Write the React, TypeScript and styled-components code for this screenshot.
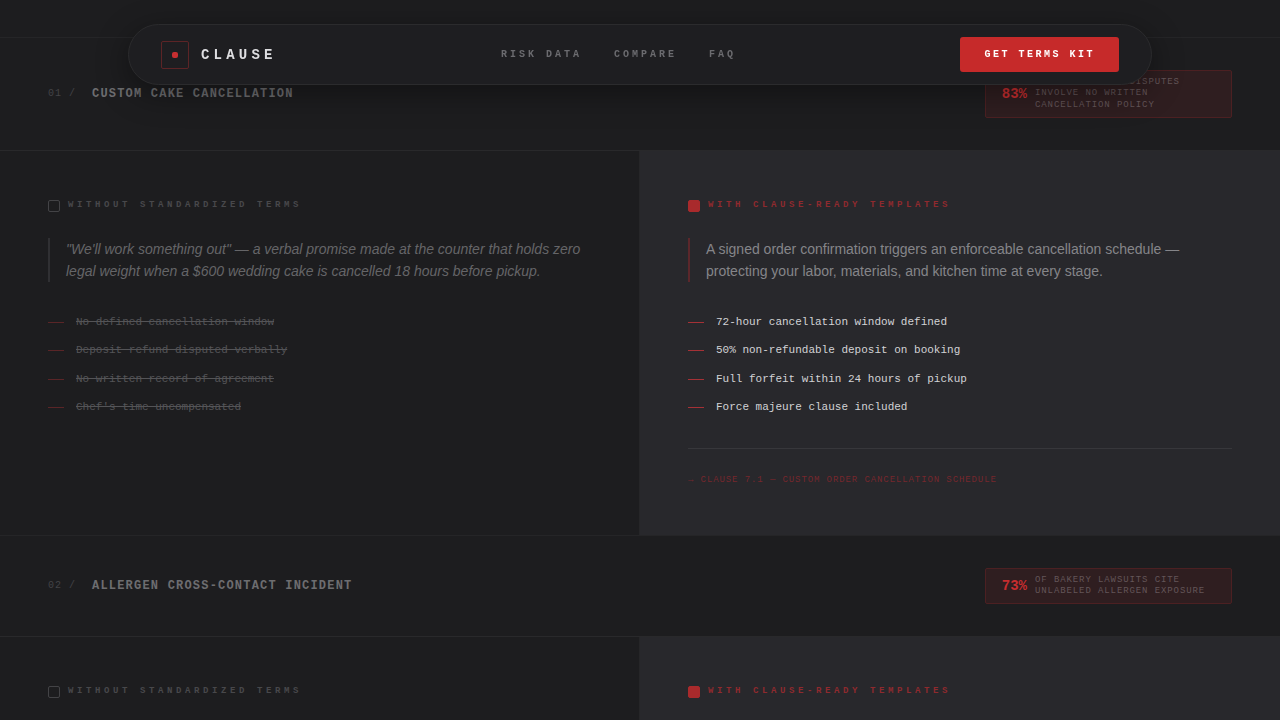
import React from "react";
import styled, { createGlobalStyle } from "styled-components";

const mono = `"Liberation Mono", monospace`;
const sans = `"Liberation Sans", sans-serif`;

const GlobalStyle = createGlobalStyle`
  *, *::before, *::after { box-sizing: border-box; }
  body { margin: 0; background: #1d1d1f; }
  h2, p, ul, blockquote { margin: 0; padding: 0; font-weight: 400; }
`;

const Page = styled.main`
  height: 100vh;
  overflow: hidden;
  padding-top: 37px;
  background: #1d1d1f;
  color: #d9d9dc;
  font-family: ${sans};
`;

/* Floating navigation pill */
const NavShell = styled.header`
  position: fixed;
  top: 24px;
  left: 24px;
  right: 24px;
  z-index: 10;
  display: flex;
  justify-content: space-between;
  align-items: center;
  max-width: 1024px;
  margin: 0 auto;
  padding: 12px 32px;
  border: 1px solid #2b2b2d;
  border-radius: 40px;
  background: #1e1e21;
  box-shadow: 0 8px 32px rgba(0, 0, 0, 0.4);
  font-family: ${mono};
`;

const Brand = styled.a`
  display: flex;
  align-items: center;
  gap: 12px;
  color: #dedee1;
  font-size: 14px;
  line-height: 16px;
  font-weight: 700;
  letter-spacing: 0.3em;
  text-decoration: none;
`;

const BrandMark = styled.span`
  display: grid;
  place-items: center;
  width: 28px;
  height: 28px;
  border: 1px solid #5c2426;
  border-radius: 2px;

  &::before {
    content: "";
    width: 6px;
    height: 6px;
    border-radius: 2px;
    background: #c62f31;
  }
`;

const NavLinks = styled.nav`
  display: flex;
  gap: 32px;
`;

const NavLink = styled.a`
  color: #6b6b6f;
  font-size: 10px;
  line-height: 12px;
  font-weight: 700;
  letter-spacing: 0.3em;
  text-decoration: none;
`;

const CtaButton = styled.button`
  padding: 12px 24px;
  border: 0;
  border-radius: 3px;
  background: #c62a2a;
  color: #ffffff;
  font-family: ${mono};
  font-size: 10px;
  line-height: 11px;
  font-weight: 700;
  letter-spacing: 0.25em;
`;

/* Scenario block */
const Scenario = styled.section`
  border-top: 1px solid #252527;
`;

const ScenarioHead = styled.div`
  display: flex;
  justify-content: space-between;
  align-items: center;
  padding: 32px 48px;
  border-bottom: 1px solid #29292b;
  font-family: ${mono};
`;

const TitleGroup = styled.div`
  display: flex;
  align-items: center;
  gap: 16px;
`;

const Index = styled.span`
  color: #434346;
  font-size: 10px;
  line-height: 16px;
  letter-spacing: 0.1em;
`;

const Title = styled.h2`
  color: #6d6d70;
  font-size: 12px;
  line-height: 16px;
  font-weight: 700;
  letter-spacing: 0.1em;
`;

const StatBadge = styled.div`
  display: flex;
  align-items: center;
  gap: 8px;
  padding: 6px 16px;
  border: 1px solid #4c2022;
  border-radius: 2px;
  background: #2f1e20;
`;

const StatValue = styled.strong`
  color: #c62d2f;
  font-size: 14px;
  line-height: 20px;
`;

const StatText = styled.span`
  max-width: 180px;
  color: #635558;
  font-size: 9px;
  line-height: 1.25;
  letter-spacing: 0.1em;
`;

const Columns = styled.div`
  display: grid;
  grid-template-columns: 1fr 1fr;
`;

const Column = styled.div<{ $on?: boolean }>`
  padding: 48px;
  border-right: ${(p) => (p.$on ? "0" : "1px solid #262628")};
  background: ${(p) => (p.$on ? "#28282c" : "#1d1d1f")};
`;

const ColumnLabel = styled.div<{ $on?: boolean }>`
  display: flex;
  align-items: flex-start;
  gap: 8px;
  min-height: 15px;
  color: ${(p) => (p.$on ? "#8f2a2e" : "#48484b")};
  font-family: ${mono};
  font-size: 9px;
  line-height: 12px;
  font-weight: 700;
  letter-spacing: 0.4em;
`;

const Marker = styled.span<{ $on?: boolean }>`
  width: 12px;
  height: 12px;
  margin-top: 1px;
  border: 1px solid ${(p) => (p.$on ? "#a92a2c" : "#434346")};
  border-radius: 2px;
  background: ${(p) => (p.$on ? "#a92a2c" : "transparent")};
`;

const Quote = styled.blockquote<{ $on?: boolean }>`
  margin-top: 24px;
  padding-left: 16px;
  border-left: 2px solid ${(p) => (p.$on ? "#5c272b" : "#303033")};
  color: ${(p) => (p.$on ? "#858589" : "#656568")};
  font-size: 14px;
  line-height: 22px;
  font-style: ${(p) => (p.$on ? "normal" : "italic")};
`;

const Points = styled.ul`
  display: flex;
  flex-direction: column;
  gap: 12px;
  margin-top: 32px;
  list-style: none;
  font-family: ${mono};
  font-size: 11px;
  line-height: 1.5;
`;

const Point = styled.li<{ $on?: boolean }>`
  display: flex;
  align-items: center;
  gap: 12px;
  color: ${(p) => (p.$on ? "#d2d2d5" : "#545457")};

  &::before {
    content: "";
    width: 16px;
    height: 1px;
    background: ${(p) => (p.$on ? "#a53136" : "#5a2527")};
  }

  span {
    text-decoration: ${(p) => (p.$on ? "none" : "line-through")};
  }
`;

const ClauseRef = styled.p`
  margin-top: 32px;
  padding-top: 24px;
  border-top: 1px solid #37373b;
  color: #76272c;
  font-family: ${mono};
  font-size: 9px;
  line-height: 14px;
  letter-spacing: 0.1em;
`;

interface Side {
  quote: string;
  points: string[];
  clause?: string;
}

interface ScenarioData {
  index: string;
  title: string;
  stat: string;
  statText: string;
  without?: Side;
  withTerms?: Side;
}

const scenarios: ScenarioData[] = [
  {
    index: "01 /",
    title: "CUSTOM CAKE CANCELLATION",
    stat: "83%",
    statText: "OF CUSTOM CAKE DISPUTES INVOLVE NO WRITTEN CANCELLATION POLICY",
    without: {
      quote:
        "\"We'll work something out\" — a verbal promise made at the counter that holds zero legal weight when a $600 wedding cake is cancelled 18 hours before pickup.",
      points: [
        "No defined cancellation window",
        "Deposit refund disputed verbally",
        "No written record of agreement",
        "Chef's time uncompensated",
      ],
    },
    withTerms: {
      quote:
        "A signed order confirmation triggers an enforceable cancellation schedule — protecting your labor, materials, and kitchen time at every stage.",
      points: [
        "72-hour cancellation window defined",
        "50% non-refundable deposit on booking",
        "Full forfeit within 24 hours of pickup",
        "Force majeure clause included",
      ],
      clause: "→ CLAUSE 7.1 — CUSTOM ORDER CANCELLATION SCHEDULE",
    },
  },
  {
    index: "02 /",
    title: "ALLERGEN CROSS-CONTACT INCIDENT",
    stat: "73%",
    statText: "OF BAKERY LAWSUITS CITE UNLABELED ALLERGEN EXPOSURE",
  },
];

function ComparisonSide({ on, label, side }: { on?: boolean; label: string; side?: Side }) {
  return (
    <Column $on={on}>
      <ColumnLabel $on={on}>
        <Marker $on={on} />
        {label}
      </ColumnLabel>
      {side && (
        <>
          <Quote $on={on}>{side.quote}</Quote>
          <Points>
            {side.points.map((point) => (
              <Point key={point} $on={on}>
                <span>{point}</span>
              </Point>
            ))}
          </Points>
          {side.clause && <ClauseRef>{side.clause}</ClauseRef>}
        </>
      )}
    </Column>
  );
}

export default function App() {
  return (
    <>
      <GlobalStyle />
      <NavShell>
        <Brand href="#top">
          <BrandMark />
          CLAUSE
        </Brand>
        <NavLinks>
          <NavLink href="#risk">RISK DATA</NavLink>
          <NavLink href="#compare">COMPARE</NavLink>
          <NavLink href="#faq">FAQ</NavLink>
        </NavLinks>
        <CtaButton type="button">GET TERMS KIT</CtaButton>
      </NavShell>
      <Page>
        {scenarios.map((s) => (
          <Scenario key={s.index}>
            <ScenarioHead>
              <TitleGroup>
                <Index>{s.index}</Index>
                <Title>{s.title}</Title>
              </TitleGroup>
              <StatBadge>
                <StatValue>{s.stat}</StatValue>
                <StatText>{s.statText}</StatText>
              </StatBadge>
            </ScenarioHead>
            <Columns>
              <ComparisonSide label="WITHOUT STANDARDIZED TERMS" side={s.without} />
              <ComparisonSide on label="WITH CLAUSE-READY TEMPLATES" side={s.withTerms} />
            </Columns>
          </Scenario>
        ))}
      </Page>
    </>
  );
}
